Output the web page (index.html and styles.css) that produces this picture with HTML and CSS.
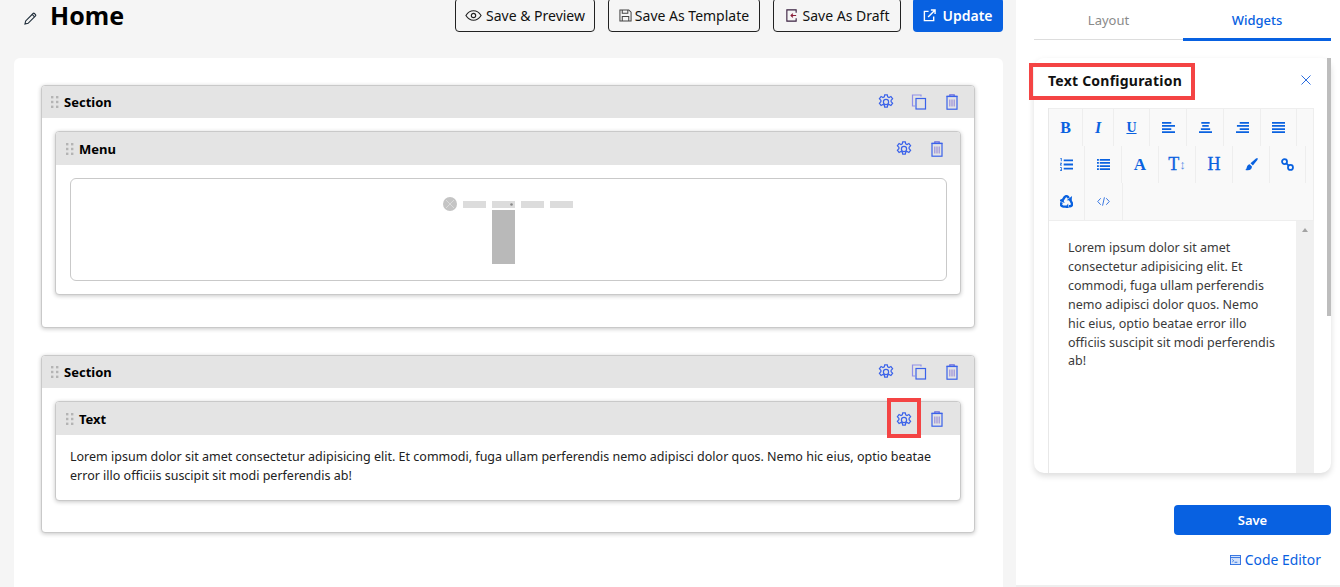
FILE: index.html
```html
<!DOCTYPE html>
<html lang="en">
<head>
    <meta charset="UTF-8">
    <title>Page Builder</title>
    <link rel="stylesheet" href="styles.css">
</head>
<body>

<svg class="defs">
    <symbol id="gear" viewBox="0 0 16 16" fill="none" stroke="currentColor" stroke-width="1.200">
        <circle cx="8" cy="8" r="2.600"/>
        <path d="M6.700 .8h2.600l.4 2.100 1.300.6 1.900-1 1.700 2.300-1.500 1.500v1.400l1.500 1.500-1.700 2.300-1.900-1-1.300.6-.4 2.100H6.700l-.4-2.100-1.300-.6-1.900 1-1.700-2.300 1.500-1.500V6.300L1.400 4.800 3.100 2.500l1.900 1 1.300-.6z"/>
    </symbol>
    <symbol id="copy" viewBox="0 0 16 16" fill="none" stroke-width="1.200">
        <path d="M10 2.500V1H1.500v11H4" stroke="#8f8fe8"/>
        <rect x="5" y="4.500" width="9.500" height="10.500" stroke="#3a62ea"/>
    </symbol>
    <symbol id="trash" viewBox="0 0 16 16" fill="none" stroke="#3a62ea" stroke-width="1.200">
        <path d="M5.800 2V.8h4.400V2" stroke="#6a6ae0"/>
        <path d="M2.500 2.300h11"/>
        <rect x="3" y="2.500" width="10" height="12.700"/>
        <path d="M5.800 5.500v7M8 5.500v7M10.200 5.500v7" stroke="#9a8fd8"/>
    </symbol>
    <symbol id="dots" viewBox="0 0 8 12" fill="#b4b4b4">
        <rect x="0" y="0" width="2.400" height="2.400"/><rect x="5" y="0" width="2.400" height="2.400"/>
        <rect x="0" y="4.800" width="2.400" height="2.400"/><rect x="5" y="4.800" width="2.400" height="2.400"/>
        <rect x="0" y="9.600" width="2.400" height="2.400"/><rect x="5" y="9.600" width="2.400" height="2.400"/>
    </symbol>
</svg>

<div class="page">
    <main class="builder">
        <header class="topbar">
            <div class="page-title">
                <svg class="pencil" viewBox="0 0 14 14" fill="none" stroke="#1f2d3a" stroke-width="1.200">
                    <path d="M1 13l.8-3.400L9.800 1.600a1 1 0 0 1 1.400 0l1.200 1.200a1 1 0 0 1 0 1.400L4.400 12.200z"/>
                    <path d="M8.800 2.600l2.600 2.600"/>
                </svg>
                <h1>Home</h1>
            </div>
            <div class="top-actions">
                <button class="btn">
                    <svg class="btn-icon wide" viewBox="0 0 18 12" fill="none" stroke="#222" stroke-width="1.200">
                        <path d="M1 6c2-3.200 4.800-5 8-5s6 1.800 8 5c-2 3.200-4.800 5-8 5S3 9.200 1 6z"/>
                        <circle cx="9" cy="6" r="2.300"/>
                    </svg>
                    Save &amp; Preview
                </button>
                <button class="btn btn-template">
                    <svg class="btn-icon" viewBox="0 0 14 14" fill="none" stroke="#444" stroke-width="1.100">
                        <path d="M1 1h9.500L13 3.500V13H1z"/>
                        <path d="M3.500 1v3.500h6V1M3.500 13V8h7v5"/>
                    </svg>
                    Save As Template
                </button>
                <button class="btn btn-draft">
                    <svg class="btn-icon" viewBox="0 0 12 14" fill="none" stroke-width="1.200">
                        <path d="M11 4V1H1v12h10v-3" stroke="#3a2040"/>
                        <path d="M11 7H5.500M7.500 5L5.500 7l2 2" stroke="#8a1f3a"/>
                    </svg>
                    Save As Draft
                </button>
                <button class="btn btn-primary">
                    <svg class="btn-icon" viewBox="0 0 14 14" fill="none" stroke="#fff" stroke-width="1.500">
                        <path d="M6 2.500H1.500v10h10V8"/>
                        <path d="M5.500 8.500L12.500 1.500M8.500 1h4.500v4.500"/>
                    </svg>
                    Update
                </button>
            </div>
        </header>

        <div class="canvas">
            <section class="block section-menu">
                <div class="block-head">
                    <svg class="drag"><use href="#dots"/></svg>
                    <span class="block-name">Section</span>
                    <div class="block-actions">
                        <svg class="tool"><use href="#gear"/></svg>
                        <svg class="tool"><use href="#copy"/></svg>
                        <svg class="tool"><use href="#trash"/></svg>
                    </div>
                </div>
                <div class="block-body">
                    <div class="block">
                        <div class="block-head">
                            <svg class="drag"><use href="#dots"/></svg>
                            <span class="block-name">Menu</span>
                            <div class="block-actions inner">
                                <svg class="tool"><use href="#gear"/></svg>
                                <svg class="tool"><use href="#trash"/></svg>
                            </div>
                        </div>
                        <div class="menu-body">
                            <div class="menu-preview">
                                <svg class="menu-art" viewBox="0 0 130 70" width="130" height="70">
                                    <circle cx="7" cy="8" r="7" fill="#c4c4c4"/>
                                    <path d="M3 4l8 8M11 4l-8 8" stroke="#e0e0e0" stroke-width=".8"/>
                                    <rect x="20" y="5" width="23" height="7" fill="#dcdcdc"/>
                                    <rect x="49" y="5" width="23" height="7" fill="#dcdcdc"/>
                                    <rect x="78" y="5" width="23" height="7" fill="#dcdcdc"/>
                                    <rect x="107" y="5" width="23" height="7" fill="#dcdcdc"/>
                                    <circle cx="68.500" cy="8.500" r="1.300" fill="#888"/>
                                    <rect x="49" y="14" width="23" height="54" fill="#b9b9b9"/>
                                </svg>
                            </div>
                        </div>
                    </div>
                </div>
            </section>

            <section class="block section-text">
                <div class="block-head">
                    <svg class="drag"><use href="#dots"/></svg>
                    <span class="block-name">Section</span>
                    <div class="block-actions">
                        <svg class="tool"><use href="#gear"/></svg>
                        <svg class="tool"><use href="#copy"/></svg>
                        <svg class="tool"><use href="#trash"/></svg>
                    </div>
                </div>
                <div class="block-body">
                    <div class="block">
                        <div class="block-head">
                            <svg class="drag"><use href="#dots"/></svg>
                            <span class="block-name">Text</span>
                            <div class="block-actions inner">
                                <span class="marked"><svg class="tool"><use href="#gear"/></svg></span>
                                <svg class="tool"><use href="#trash"/></svg>
                            </div>
                        </div>
                        <p class="text-body">Lorem ipsum dolor sit amet consectetur adipisicing elit. Et commodi, fuga ullam perferendis nemo adipisci dolor quos. Nemo hic eius, optio beatae error illo officiis suscipit sit modi perferendis ab!</p>
                    </div>
                </div>
            </section>
        </div>
    </main>

    <aside class="sidebar">
        <div class="tabs">
            <div class="tab">Layout</div>
            <div class="tab active">Widgets</div>
        </div>

        <div class="config">
            <div class="config-head">
                <h2 class="config-title">Text Configuration</h2>
                <svg class="close" viewBox="0 0 10 10" fill="none" stroke="#2a6de0" stroke-width="1"><path d="M.5.500l9 9M9.500.500l-9 9"/></svg>
            </div>

            <div class="editor">
                <div class="toolbar">
                    <div class="tool-row">
                        <span class="tb w34 serif">B</span>
                        <span class="tb w31 serif italic">I</span>
                        <span class="tb w36 serif under">U</span>
                        <span class="tb w37"><svg class="tb-icon" viewBox="0 0 14 12"><path d="M0 0h10v2H0zM0 3.300h14v2H0zM0 6.700h10v2H0zM0 10h14v2H0z"/></svg></span>
                        <span class="tb w37"><svg class="tb-icon" viewBox="0 0 14 12"><path d="M2.500 0h9v2h-9zM3.500 3.300h7v2h-7zM2 6.700h10v2H2zM0 10h14v2H0z"/></svg></span>
                        <span class="tb w37"><svg class="tb-icon" viewBox="0 0 14 12"><path d="M4 0h10v2H4zM1 3.300h13v2H1zM4 6.700h10v2H4zM0 10h14v2H0z"/></svg></span>
                        <span class="tb w36"><svg class="tb-icon" viewBox="0 0 14 12"><path d="M0 0h14v2H0zM0 3.300h14v2H0zM0 6.700h14v2H0zM0 10h14v2H0z"/></svg></span>
                    </div>
                    <div class="tool-row">
                        <span class="tb w36"><svg class="tb-icon" viewBox="0 0 14 14"><path d="M4 1.500h10v2H4zM4 6h10v2H4zM4 10.500h10v2H4zM.5 0h1.300v3.400H.9V1H.5zM0 5h2v.8L1 7.200h1V8H0v-.8l1-1.400H0zM0 10h2v4H0v-.7h1.200v-.9H.4v-.6h.8v-1H0z"/></svg></span>
                        <span class="tb w37"><svg class="tb-icon" viewBox="0 0 14 12"><path d="M0 0h2v2H0zM3 0h11v2H3zM0 3.300h2v2H0zM3 3.300h11v2H3zM0 6.700h2v2H0zM3 6.700h11v2H3zM0 10h2v2H0zM3 10h11v2H3z"/></svg></span>
                        <span class="tb w37 serif big">A</span>
                        <span class="tb w37 serif thin">T<small class="updown">↕</small></span>
                        <span class="tb w37 serif thin">H</span>
                        <span class="tb w37"><svg class="tb-icon" viewBox="0 0 14 14"><path d="M13.600.4c.4.4.2 1-.3 1.700L8.500 8.200 5.900 5.600 11.800.6c.7-.5 1.400-.6 1.800-.2zM5 6.600l2.500 2.500c0 2.900-2.200 4.700-7.200 3.700 1.400-.8 1.400-2 1.900-3.700.4-1.400 1.600-2.400 2.800-2.500z"/></svg></span>
                        <span class="tb w36"><svg class="tb-icon" viewBox="0 0 14 14" fill="none"><g stroke="#0a62e0" stroke-width="1.900" fill="none"><circle cx="3.800" cy="3.800" r="2.700"/><circle cx="10.200" cy="10.200" r="2.700"/><path d="M5.500 5.500l3 3"/></g></svg></span>
                    </div>
                    <div class="tool-row">
                        <span class="tb w36">
                            <svg class="tb-icon" viewBox="0 0 14 14">
                                <g id="recycle-arm">
                                    <path d="M2.600 6L5 2.200Q7 .2 8.800 2.300L9.400 3.300" fill="none" stroke="#0a62e0" stroke-width="2.600"/>
                                    <path d="M7.200 5.700l5.300.2.500-4.800z"/>
                                </g>
                                <use href="#recycle-arm" transform="rotate(120 7 7.800)"/>
                                <use href="#recycle-arm" transform="rotate(240 7 7.800)"/>
                            </svg>
                        </span>
                        <span class="tb w38"><svg class="tb-icon" viewBox="0 0 14 10" fill="none" stroke="#2a6de0" stroke-width="1"><path d="M4 1.500L.800 5 4 8.500M10 1.500L13.200 5 10 8.500M8 .500L6 9.500"/></svg></span>
                    </div>
                </div>
                <div class="editor-area">
                    <p class="editor-text">Lorem ipsum dolor sit amet consectetur adipisicing elit. Et commodi, fuga ullam perferendis nemo adipisci dolor quos. Nemo hic eius, optio beatae error illo officiis suscipit sit modi perferendis ab!</p>
                    <div class="editor-scroll"><span class="arrow"></span></div>
                </div>
            </div>
            <div class="panel-scroll"></div>
        </div>

        <button class="save">Save</button>
        <a class="code-link">
            <svg class="code-icon" viewBox="0 0 12 11" fill="none" stroke="#2a6de0"><rect x=".500" y=".500" width="11" height="10" fill="#d5e3fa"/><path d="M.500 2.800h11" /><path d="M2.500 5l1.500 1.300-1.500 1.300M5 8h3"/></svg>
            Code Editor
        </a>
    </aside>
</div>

</body>
</html>
```

FILE: styles.css
```css
* {
    box-sizing: border-box;
}

html, body {
    margin: 0;
    height: 587px;
    overflow: hidden;
}

body {
    font-family: "Noto Sans", sans-serif;
    font-size: 13px;
    color: #111;
    background: #f5f5f5;
}

.defs {
    display: none;
}

.page {
    display: grid;
    grid-template-columns: 1016px 324px;
    height: 587px;
}

/* left side */
.builder {
    padding: 0 13px 0 14px;
    min-width: 0;
}

.topbar {
    display: flex;
    justify-content: space-between;
    align-items: flex-start;
    height: 58px;
}

.page-title {
    display: flex;
    align-items: center;
    gap: 13px;
    padding: 0 0 0 10px;
    height: 32px;
}

.pencil {
    width: 13px;
    height: 13px;
    margin-top: 5px;
}

.page-title h1 {
    margin: -2px 0 0;
    font-size: 25px;
    line-height: 32px;
    font-weight: 700;
    color: #000;
}

.top-actions {
    display: flex;
    gap: 13px;
    margin-top: -2px;
}

.btn {
    display: flex;
    align-items: center;
    justify-content: center;
    gap: 4px;
    width: 140px;
    height: 34px;
    padding: 0;
    border: 1px solid #222;
    border-radius: 4px;
    background: #f5f5f5;
    color: #111;
    font-family: "Noto Sans", sans-serif;
    font-size: 14px;
}

.btn-template {
    width: 152px;
    gap: 3px;
}

.btn-draft {
    width: 128px;
    gap: 5px;
}

.btn-primary {
    width: 90px;
    gap: 6px;
    margin-left: -1px;
    border: none;
    background: #0861e1;
    color: #fff;
    font-weight: 600;
}

.btn-icon {
    width: 13px;
    height: 13px;
}

.btn-icon.wide {
    width: 17px;
}

.canvas {
    height: 529px;
    padding: 27px 28px 0 27px;
    background: #fff;
    border-radius: 6px 6px 0 0;
}

.block {
    background: #fff;
    border: 1px solid #c9c9c9;
    border-radius: 4px;
    box-shadow: 0 1px 4px rgba(0, 0, 0, 0.22);
}

.section-menu {
    height: 243px;
    margin-bottom: 27px;
}

.section-text {
    height: 178px;
}

.block-head {
    display: flex;
    align-items: center;
    height: 32px;
    padding: 0 14px 0 9px;
    background: #e4e4e4;
    border-radius: 3px 3px 0 0;
}

.block-body .block-head {
    height: 33px;
    padding-left: 10px;
}

.drag {
    width: 8px;
    height: 12px;
    margin-right: 5px;
}

.block-name {
    font-weight: 700;
    font-size: 13px;
    color: #000;
}

.block-actions {
    display: flex;
    align-items: center;
    gap: 17px;
    margin-left: auto;
}

.block-actions.inner {
    gap: 17px;
    padding-right: 1px;
}

.tool {
    width: 16px;
    height: 16px;
    color: #3a62ea;
}

.marked {
    display: flex;
    align-items: center;
    justify-content: center;
    width: 34px;
    height: 40px;
    margin: -2px -9px 0;
    padding-top: 4px;
    border: 4px solid #f44444;
}

.block-body {
    padding: 13px 13px 0;
}

.menu-body {
    padding: 13px 13px 13px 14px;
}

.menu-preview {
    display: flex;
    justify-content: center;
    height: 103px;
    padding-top: 17px;
    border: 1px solid #c9c9c9;
    border-radius: 6px;
}

.menu-art {
    display: block;
    margin-right: 2px;
}

.text-body {
    margin: 0;
    padding: 12px 14px 15px;
    font-size: 12.500px;
    line-height: 19px;
    color: #222;
}

/* right side */
.sidebar {
    background: #fff;
    padding: 0 9px 0 18px;
    border-bottom: 2px solid #eee;
    min-width: 0;
}

.tabs {
    display: grid;
    grid-template-columns: 149px 148px;
    align-items: start;
    height: 41px;
}

.tab {
    height: 40px;
    padding-top: 11px;
    text-align: center;
    font-size: 13px;
    color: #8a8a8a;
    border-bottom: 1px solid #ddd;
}

.tab.active {
    height: 41px;
    color: #0861e1;
    font-weight: 500;
    border-bottom: 3px solid #0861e1;
}

.config {
    position: relative;
    height: 415px;
    margin-top: 17px;
    border-radius: 10px;
    box-shadow: 0 3px 6px rgba(0, 0, 0, 0.14);
}

.panel-scroll {
    position: absolute;
    top: 0;
    right: 0;
    width: 4px;
    height: 258px;
    background: #bdbdbd;
}

.config-head {
    display: flex;
    align-items: flex-start;
    justify-content: space-between;
    height: 50px;
    padding-right: 20px;
}

.config-title {
    margin: 5px 0 0 -5px;
    width: 166px;
    height: 37px;
    padding-left: 15px;
    border: 4px solid #f44444;
    font-size: 14px;
    line-height: 28px;
    font-weight: 700;
    letter-spacing: 0.23px;
    color: #111;
}

.close {
    width: 10px;
    height: 10px;
    margin-top: 17px;
}

.editor {
    width: 266px;
    height: 365px;
    margin-left: 14px;
    border-left: 1px solid #e8e8e8;
}

.toolbar {
    height: 113px;
    background: #f9f9f9;
    border: 1px solid #eee;
    border-left: none;
}

.tool-row {
    display: flex;
    height: 37px;
}

.tb {
    display: flex;
    align-items: center;
    justify-content: center;
    height: 37px;
    border-right: 1px solid #eee;
    color: #0a62e0;
    fill: #0a62e0;
}

.w31 { width: 31px; }
.w34 { width: 34px; }
.w36 { width: 36px; }
.w37 { width: 37px; }
.w38 { width: 38px; }

.serif {
    font-family: "Liberation Serif", serif;
    font-size: 16px;
    font-weight: 700;
}

.serif.big {
    font-size: 17px;
}

.serif.thin {
    font-size: 18px;
    font-weight: 400;
    -webkit-text-stroke: 0.3px #0a62e0;
}

.updown {
    font-size: 13px;
    font-weight: 400;
    -webkit-text-stroke: 0;
    opacity: 0.7;
}

.italic {
    font-style: italic;
}

.under {
    font-size: 14px;
    text-decoration: underline;
}

.tb-icon {
    width: 13px;
    height: 13px;
}

.editor-area {
    display: flex;
    height: 252px;
}

.editor-text {
    width: 247px;
    margin: 0;
    padding: 18px 18px 0 19px;
    font-size: 12.500px;
    line-height: 18.900px;
    color: #3a3a3a;
}

.editor-scroll {
    flex: 1;
    display: flex;
    justify-content: center;
    padding-top: 7px;
    background: #f0f0f0;
}

.arrow {
    width: 0;
    height: 0;
    border-left: 3px solid transparent;
    border-right: 3px solid transparent;
    border-bottom: 4px solid #a3a3a3;
}

.save {
    display: block;
    width: 157px;
    height: 30px;
    margin: 32px 0 0 140px;
    border: none;
    border-radius: 4px;
    background: #0861e1;
    color: #fff;
    font-family: "Noto Sans", sans-serif;
    font-size: 13px;
    font-weight: 600;
}

.code-link {
    display: flex;
    align-items: center;
    justify-content: flex-end;
    gap: 4px;
    margin-top: 15px;
    padding-right: 10px;
    font-size: 13.900px;
    color: #0861e1;
}

.code-icon {
    width: 11px;
    height: 10px;
}
```
